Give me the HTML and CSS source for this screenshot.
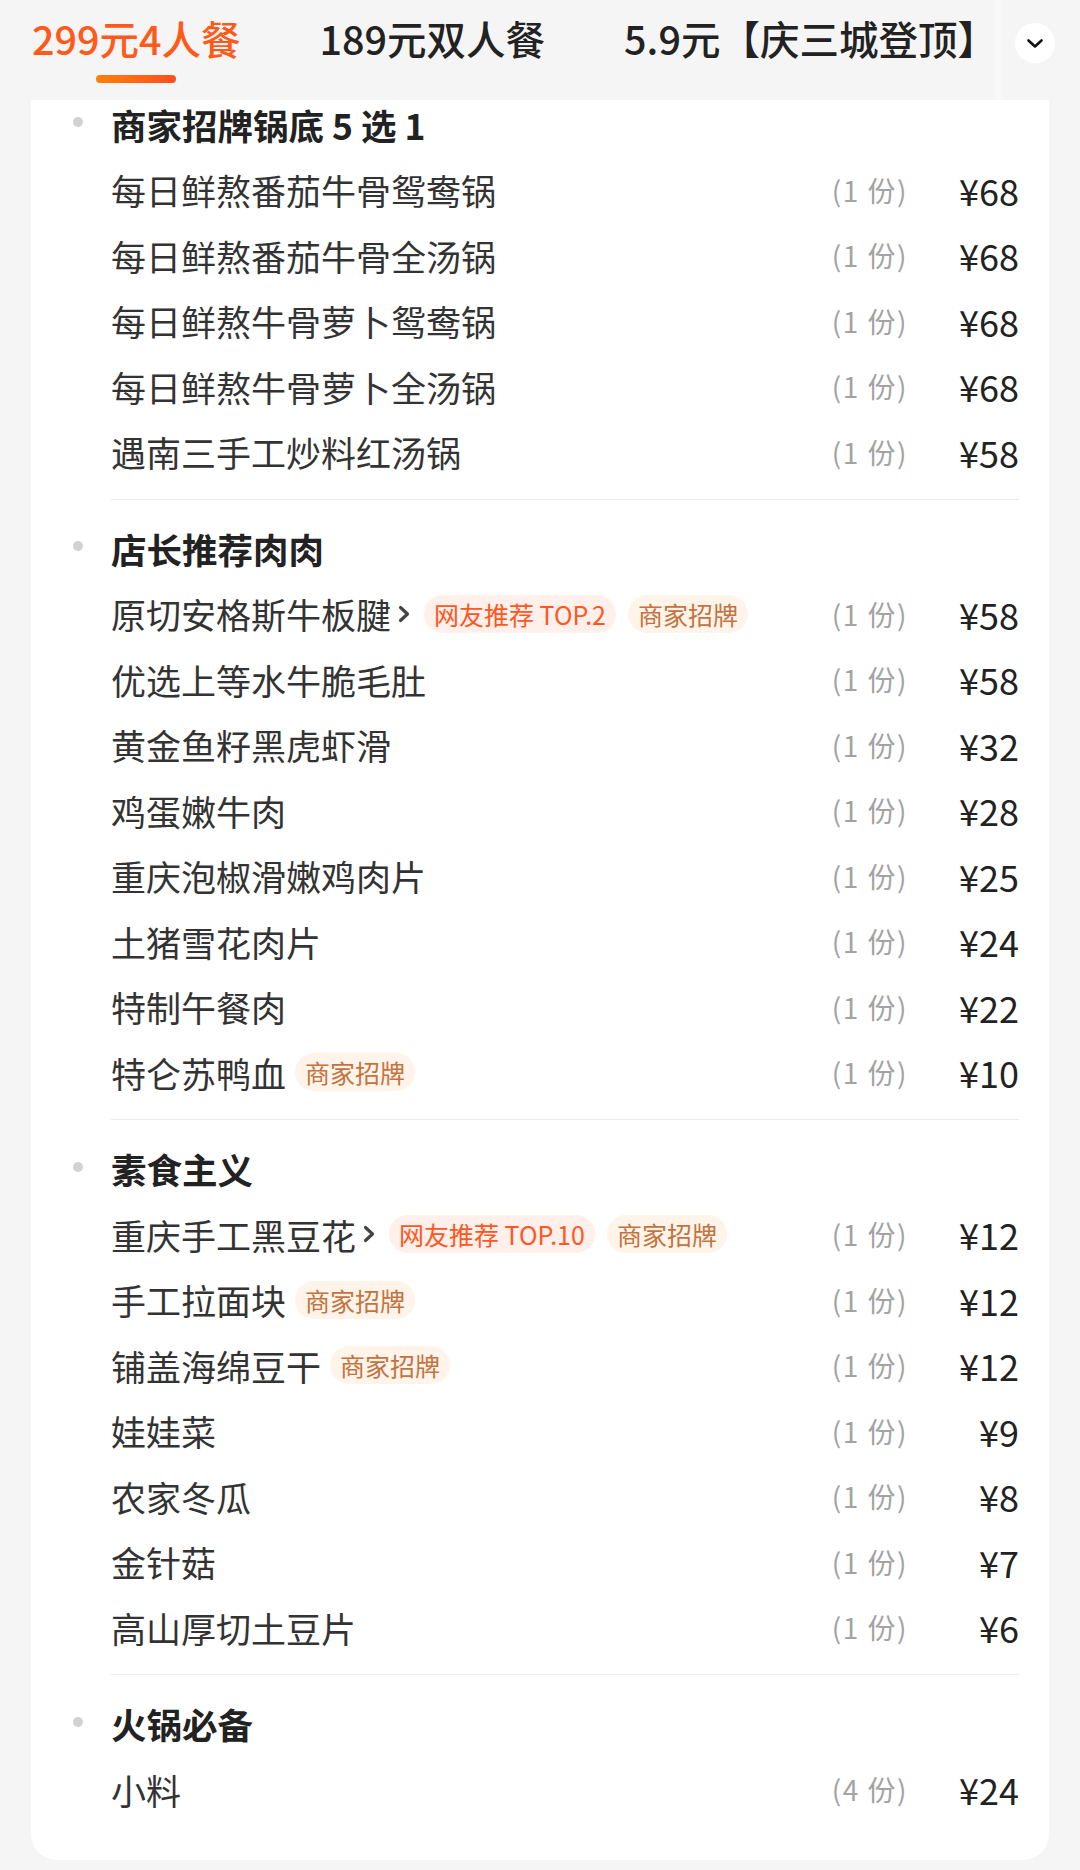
FILE: index.html
```html
<!DOCTYPE html>
<html lang="zh-CN">
<head>
<meta charset="utf-8">
<title>套餐详情</title>
<link rel="stylesheet" href="styles.css">
</head>
<body>
<header class="tabbar">
  <nav class="tabs">
    <div class="tab active"><span class="tab-text">299元4人餐</span><span class="indicator"></span></div>
    <div class="tab"><span class="tab-text">189元双人餐</span></div>
    <div class="tab"><span class="tab-text">5.9元【庆三城登顶】</span></div>
  </nav>
  <div class="more-wrap">
    <button class="more" aria-label="展开">
      <svg width="18" height="11" viewBox="0 0 18 11"><path d="M2.5 2.5 L9 8.5 L15.5 2.5" fill="none" stroke="#111" stroke-width="2.6" stroke-linecap="round" stroke-linejoin="round"/></svg>
    </button>
  </div>
</header>

<main class="card">
  <section class="group">
    <h3 class="group-title"><span class="dot"></span>商家招牌锅底 5 选 1</h3>
    <ul class="items">
      <li class="item"><span class="name">每日鲜熬番茄牛骨鸳鸯锅</span><span class="qty">(1 份)</span><span class="price">¥68</span></li>
      <li class="item"><span class="name">每日鲜熬番茄牛骨全汤锅</span><span class="qty">(1 份)</span><span class="price">¥68</span></li>
      <li class="item"><span class="name">每日鲜熬牛骨萝卜鸳鸯锅</span><span class="qty">(1 份)</span><span class="price">¥68</span></li>
      <li class="item"><span class="name">每日鲜熬牛骨萝卜全汤锅</span><span class="qty">(1 份)</span><span class="price">¥68</span></li>
      <li class="item"><span class="name">遇南三手工炒料红汤锅</span><span class="qty">(1 份)</span><span class="price">¥58</span></li>
    </ul>
  </section>

  <section class="group">
    <h3 class="group-title"><span class="dot"></span>店长推荐肉肉</h3>
    <ul class="items">
      <li class="item"><span class="name">原切安格斯牛板腱</span><svg class="arrow" width="16" height="22" viewBox="0 0 16 22"><path d="M4.5 4.5 L11.5 11 L4.5 17.5" fill="none" stroke="#444" stroke-width="3.2" stroke-linecap="round" stroke-linejoin="round"/></svg><span class="tags"><span class="tag tag-hot">网友推荐 TOP.2</span><span class="tag tag-sign">商家招牌</span></span><span class="qty">(1 份)</span><span class="price">¥58</span></li>
      <li class="item"><span class="name">优选上等水牛脆毛肚</span><span class="qty">(1 份)</span><span class="price">¥58</span></li>
      <li class="item"><span class="name">黄金鱼籽黑虎虾滑</span><span class="qty">(1 份)</span><span class="price">¥32</span></li>
      <li class="item"><span class="name">鸡蛋嫩牛肉</span><span class="qty">(1 份)</span><span class="price">¥28</span></li>
      <li class="item"><span class="name">重庆泡椒滑嫩鸡肉片</span><span class="qty">(1 份)</span><span class="price">¥25</span></li>
      <li class="item"><span class="name">土猪雪花肉片</span><span class="qty">(1 份)</span><span class="price">¥24</span></li>
      <li class="item"><span class="name">特制午餐肉</span><span class="qty">(1 份)</span><span class="price">¥22</span></li>
      <li class="item"><span class="name">特仑苏鸭血</span><span class="tags"><span class="tag tag-sign">商家招牌</span></span><span class="qty">(1 份)</span><span class="price">¥10</span></li>
    </ul>
  </section>

  <section class="group">
    <h3 class="group-title"><span class="dot"></span>素食主义</h3>
    <ul class="items">
      <li class="item"><span class="name">重庆手工黑豆花</span><svg class="arrow" width="16" height="22" viewBox="0 0 16 22"><path d="M4.5 4.5 L11.5 11 L4.5 17.5" fill="none" stroke="#444" stroke-width="3.2" stroke-linecap="round" stroke-linejoin="round"/></svg><span class="tags"><span class="tag tag-hot">网友推荐 TOP.10</span><span class="tag tag-sign">商家招牌</span></span><span class="qty">(1 份)</span><span class="price">¥12</span></li>
      <li class="item"><span class="name">手工拉面块</span><span class="tags"><span class="tag tag-sign">商家招牌</span></span><span class="qty">(1 份)</span><span class="price">¥12</span></li>
      <li class="item"><span class="name">铺盖海绵豆干</span><span class="tags"><span class="tag tag-sign">商家招牌</span></span><span class="qty">(1 份)</span><span class="price">¥12</span></li>
      <li class="item"><span class="name">娃娃菜</span><span class="qty">(1 份)</span><span class="price">¥9</span></li>
      <li class="item"><span class="name">农家冬瓜</span><span class="qty">(1 份)</span><span class="price">¥8</span></li>
      <li class="item"><span class="name">金针菇</span><span class="qty">(1 份)</span><span class="price">¥7</span></li>
      <li class="item"><span class="name">高山厚切土豆片</span><span class="qty">(1 份)</span><span class="price">¥6</span></li>
    </ul>
  </section>

  <section class="group">
    <h3 class="group-title"><span class="dot"></span>火锅必备</h3>
    <ul class="items">
      <li class="item"><span class="name">小料</span><span class="qty">(4 份)</span><span class="price">¥24</span></li>
    </ul>
  </section>
</main>
</body>
</html>
```

FILE: styles.css
```css
* { box-sizing: border-box; }

html, body {
  margin: 0;
  padding: 0;
}

body {
  width: 1080px;
  height: 1870px;
  overflow: hidden;
  background: #f5f5f5;
  font-family: "Noto Sans CJK SC", "Noto Sans", sans-serif;
  color: #333;
}

/* ---------- tab bar ---------- */
.tabbar {
  height: 100px;
  display: flex;
}

.tabs {
  flex: 1;
  min-width: 0;
  display: flex;
  gap: 79px;
  padding-left: 32px;
}

.tab {
  display: flex;
  flex-direction: column;
  align-items: center;
  padding-top: 13px;
  white-space: nowrap;
}

.tab-text {
  font-size: 39.5px;
  line-height: 50px;
  font-weight: 500;
  color: #222;
}

.tab.active .tab-text {
  color: #ff5a1a;
}

.indicator {
  width: 80px;
  height: 8px;
  margin-top: 12px;
  border-radius: 4px;
  background: linear-gradient(90deg, #ff8008, #ff4e1c);
}

.more-wrap {
  position: relative;
  flex: none;
  width: 86px;
  display: flex;
  justify-content: flex-end;
  padding-top: 23px;
  padding-right: 25px;
}

.more-wrap::before {
  content: "";
  position: absolute;
  left: -2px;
  top: 0;
  width: 12px;
  height: 100px;
  background: linear-gradient(90deg, rgba(245,245,245,0), rgba(252,252,252,0.7), rgba(245,245,245,0));
}

.more {
  width: 40px;
  height: 40px;
  padding: 0;
  border: 0;
  border-radius: 50%;
  background: #fff;
  display: flex;
  align-items: center;
  justify-content: center;
}

/* ---------- card ---------- */
.card {
  margin: 0 31px;
  height: 1760px;
  background: #fff;
  border-radius: 0 0 26px 26px;
  padding: 0 30px 36px 80px;
  overflow: hidden;
}

.group {
  padding: 16px 0 14px;
  border-bottom: 1px solid #ececec;
}

.group:first-child {
  padding-top: 0;
  margin-top: -8.5px;
}

.group:last-child {
  border-bottom: 0;
  padding-bottom: 0;
}

.group-title {
  margin: 0;
  height: 65.5px;
  display: flex;
  align-items: center;
  font-size: 35.5px;
  font-weight: 700;
  color: #222;
}

.dot {
  flex: none;
  width: 10px;
  height: 10px;
  border-radius: 50%;
  background: #d2d2d2;
  margin-left: -38px;
  margin-right: 28px;
  position: relative;
  top: -2px;
}

.items {
  list-style: none;
  margin: 0;
  padding: 0;
}

.item {
  height: 65.5px;
  display: flex;
  align-items: center;
}

.name {
  font-size: 35px;
  color: #333;
  white-space: nowrap;
}

.arrow {
  flex: none;
  margin-left: 5px;
  margin-right: 3px;
}

.tags {
  display: flex;
  gap: 12px;
  margin-left: 9px;
}

.tag {
  height: 38px;
  line-height: 38px;
  padding: 0 10px;
  border-radius: 19px;
  font-size: 25px;
  white-space: nowrap;
}

.tag-hot {
  background: #fff0eb;
  color: #ff5722;
}

.tag-sign {
  background: #fff4ea;
  color: #c4733f;
}

.qty {
  margin-left: auto;
  font-size: 28px;
  letter-spacing: 1.5px;
  color: #a3a3a3;
  white-space: nowrap;
}

.price {
  width: 111px;
  text-align: right;
  font-size: 36px;
  color: #222;
  white-space: nowrap;
}
```
